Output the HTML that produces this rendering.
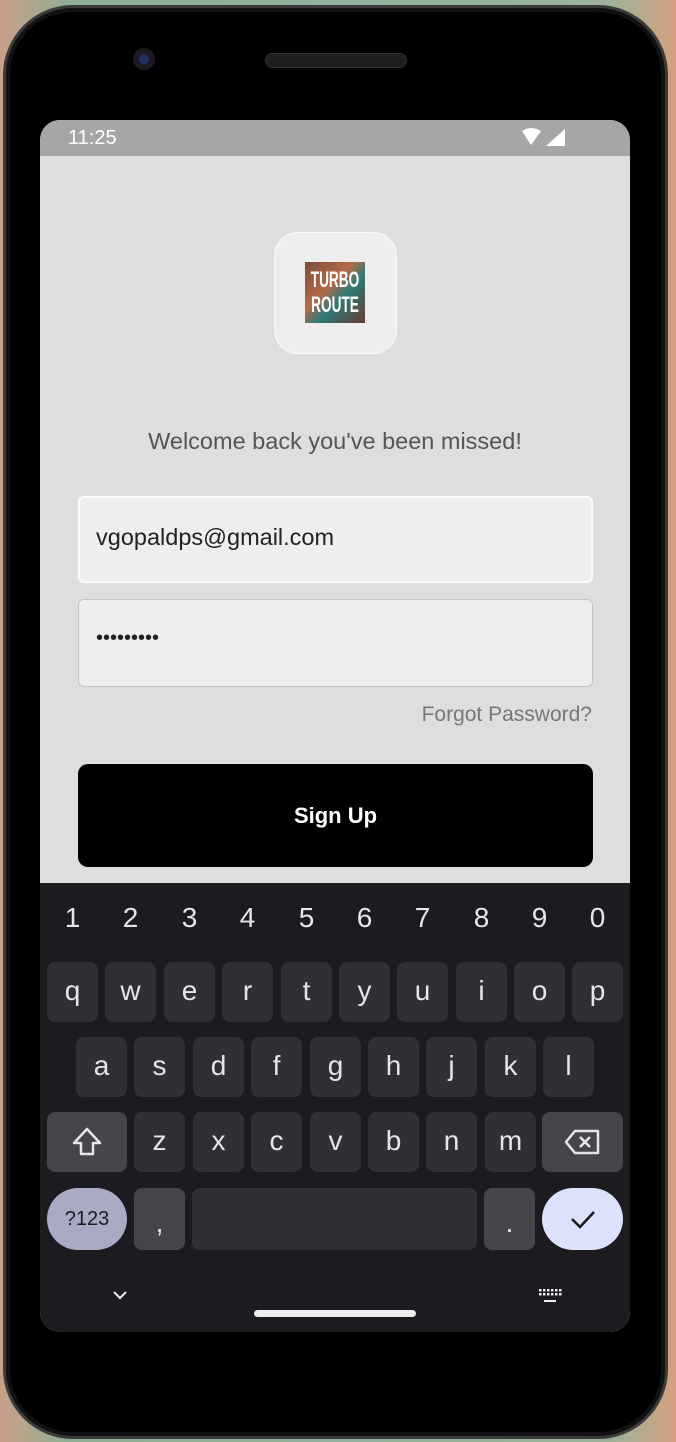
<!DOCTYPE html>
<html><head><meta charset="utf-8"><style>
*{margin:0;padding:0;box-sizing:border-box}
body{width:676px;height:1442px;overflow:hidden;position:relative;background:linear-gradient(90deg,#c9a08a 0%,#8fae93 10%,#93b09a 50%,#9cb39a 90%,#d2a080 100%);font-family:"Liberation Sans",Roboto,sans-serif}
.a{position:absolute}
.phone{left:3px;top:5px;width:665px;height:1434px;border-radius:70px;background:#000;border:3px solid #3a3a3a;box-shadow:inset 0 0 0 4px #111}
.screen{left:40px;top:120px;width:590px;height:1212px;border-radius:20px;overflow:hidden;background:#dedede}
.k{position:absolute;width:51px;height:60px;border-radius:8px;background:#302f35;color:#e6e6ea;font-size:28px;text-align:center;line-height:58px}
.n{position:absolute;width:51px;color:#e6e6ea;font-size:28px;text-align:center;top:19px}
</style></head><body>
<div class="a phone"></div>
<div class="a" style="left:133px;top:48px;width:22px;height:22px;border-radius:50%;background:#1a1a22"><div style="margin:6px;width:10px;height:10px;border-radius:50%;background:#203060"></div></div>
<div class="a" style="left:265px;top:53px;width:142px;height:15px;border-radius:8px;background:#1e1e1e;border:1px solid #333"></div>
<div class="a screen">
 <div class="a" style="left:0;top:0;width:590px;height:36px;background:#a6a6a6"></div>
 <div class="a" style="left:28px;top:7px;color:#fff;font-size:20px">11:25</div>
 <svg class="a" style="left:480px;top:8px" width="50" height="20" viewBox="0 0 50 20"><path d="M2 3 Q11 -3 21 3 L11 17 Z" fill="#fff"/><path d="M26 18 L45 18 L45 1 Z" fill="#fff"/></svg>
 <div class="a" style="left:234px;top:112px;width:123px;height:122px;border-radius:24px;background:#eeeeee;border:1px solid #fafafa"></div>
 <div class="a" style="left:265px;top:142px;width:60px;height:61px;overflow:hidden;background:linear-gradient(135deg,#7a4a38,#b56a48 40%,#2d7a78 60%,#6a3a30);color:#fff;font-family:'Liberation Sans Narrow','Liberation Sans',sans-serif;font-weight:bold;font-size:22px;line-height:25px;text-align:center;padding-top:5px"><div style="transform:scaleX(0.62);transform-origin:center;margin-left:-20px;width:100px">TURBO<br>ROUTE</div></div>
 <div class="a" style="left:0;top:308px;width:590px;text-align:center;color:#555;font-size:23.5px">Welcome back you've been missed!</div>
 <div class="a" style="left:38px;top:376px;width:515px;height:87px;border-radius:6px;background:#eeeeee;border:2px solid #fafafa"></div>
 <div class="a" style="left:56px;top:404px;color:#222;font-size:23.5px">vgopaldps@gmail.com</div>
 <div class="a" style="left:38px;top:479px;width:515px;height:88px;border-radius:6px;background:#eeeeee;border:1px solid #c4c4c4"></div>
 <div class="a" style="left:56px;top:507px;color:#222;font-size:20px;letter-spacing:0px">•••••••••</div>
 <div class="a" style="right:38px;top:583px;color:#777;font-size:21px">Forgot Password?</div>
 <div class="a" style="left:38px;top:644px;width:515px;height:103px;border-radius:10px;background:#000;color:#fff;font-weight:bold;font-size:22px;text-align:center;line-height:103px">Sign Up</div>
 <div class="a" style="left:0;top:763px;width:590px;height:449px;background:#1c1b20">
  <div class="n" style="left:7px">1</div><div class="n" style="left:65px">2</div><div class="n" style="left:124px">3</div><div class="n" style="left:182px">4</div><div class="n" style="left:241px">5</div><div class="n" style="left:299px">6</div><div class="n" style="left:357px">7</div><div class="n" style="left:416px">8</div><div class="n" style="left:474px">9</div><div class="n" style="left:532px">0</div>
  <div class="k" style="left:7px;top:79px">q</div><div class="k" style="left:65px;top:79px">w</div><div class="k" style="left:124px;top:79px">e</div><div class="k" style="left:182px;top:79px">r</div><div class="k" style="left:241px;top:79px">t</div><div class="k" style="left:299px;top:79px">y</div><div class="k" style="left:357px;top:79px">u</div><div class="k" style="left:416px;top:79px">i</div><div class="k" style="left:474px;top:79px">o</div><div class="k" style="left:532px;top:79px">p</div>
  <div class="k" style="left:36px;top:154px">a</div><div class="k" style="left:94px;top:154px">s</div><div class="k" style="left:153px;top:154px">d</div><div class="k" style="left:211px;top:154px">f</div><div class="k" style="left:270px;top:154px">g</div><div class="k" style="left:328px;top:154px">h</div><div class="k" style="left:386px;top:154px">j</div><div class="k" style="left:445px;top:154px">k</div><div class="k" style="left:503px;top:154px">l</div>
  <div class="k" style="left:7px;top:229px;width:80px;background:#46454b"><svg width="34" height="34" viewBox="0 0 34 34" style="margin-top:13px"><path d="M17 4 L30 18 L23 18 L23 29 L11 29 L11 18 L4 18 Z" fill="none" stroke="#e6e6ea" stroke-width="2.5" stroke-linejoin="round"/></svg></div>
  <div class="k" style="left:94px;top:229px">z</div><div class="k" style="left:153px;top:229px">x</div><div class="k" style="left:211px;top:229px">c</div><div class="k" style="left:270px;top:229px">v</div><div class="k" style="left:328px;top:229px">b</div><div class="k" style="left:386px;top:229px">n</div><div class="k" style="left:445px;top:229px">m</div>
  <div class="k" style="left:502px;top:229px;width:81px;background:#46454b"><svg width="40" height="30" viewBox="0 0 40 30" style="margin-top:15px"><path d="M12 4 L35 4 L35 26 L12 26 L3 15 Z" fill="none" stroke="#e6e6ea" stroke-width="2.5" stroke-linejoin="round"/><path d="M17 10 L27 20 M27 10 L17 20" stroke="#e6e6ea" stroke-width="2.5"/></svg></div>
  <div class="k" style="left:7px;top:305px;width:80px;height:62px;border-radius:31px;background:#a9abc4;color:#1c1b20;font-size:20px;line-height:62px">?123</div>
  <div class="k" style="left:94px;top:305px;height:62px;background:#46454b;line-height:70px">,</div>
  <div class="k" style="left:152px;top:305px;width:285px;height:62px"></div>
  <div class="k" style="left:444px;top:305px;height:62px;background:#46454b;line-height:70px">.</div>
  <div class="k" style="left:502px;top:305px;width:81px;height:62px;border-radius:31px;background:#dce2fb"><svg width="30" height="30" viewBox="0 0 30 30" style="margin-top:16px"><path d="M4 15 L12 23 L26 8" fill="none" stroke="#1c1b20" stroke-width="2.6"/></svg></div>
  <svg class="a" style="left:72px;top:406px" width="16" height="12" viewBox="0 0 16 12"><path d="M2 3 L8 9 L14 3" fill="none" stroke="#eee" stroke-width="2"/></svg>
  <svg class="a" style="left:498px;top:405px" width="24" height="18" viewBox="0 0 24 18"><g fill="#eee"><rect x="1" y="1" width="2.5" height="2.5"/><rect x="5" y="1" width="2.5" height="2.5"/><rect x="9" y="1" width="2.5" height="2.5"/><rect x="13" y="1" width="2.5" height="2.5"/><rect x="17" y="1" width="2.5" height="2.5"/><rect x="21" y="1" width="2.5" height="2.5"/><rect x="1" y="5" width="2.5" height="2.5"/><rect x="5" y="5" width="2.5" height="2.5"/><rect x="9" y="5" width="2.5" height="2.5"/><rect x="13" y="5" width="2.5" height="2.5"/><rect x="17" y="5" width="2.5" height="2.5"/><rect x="21" y="5" width="2.5" height="2.5"/><rect x="6" y="12" width="12" height="2"/></g></svg>
  <div class="a" style="left:214px;top:427px;width:162px;height:7px;border-radius:4px;background:#eee"></div>
 </div>
</div>
</body></html>
